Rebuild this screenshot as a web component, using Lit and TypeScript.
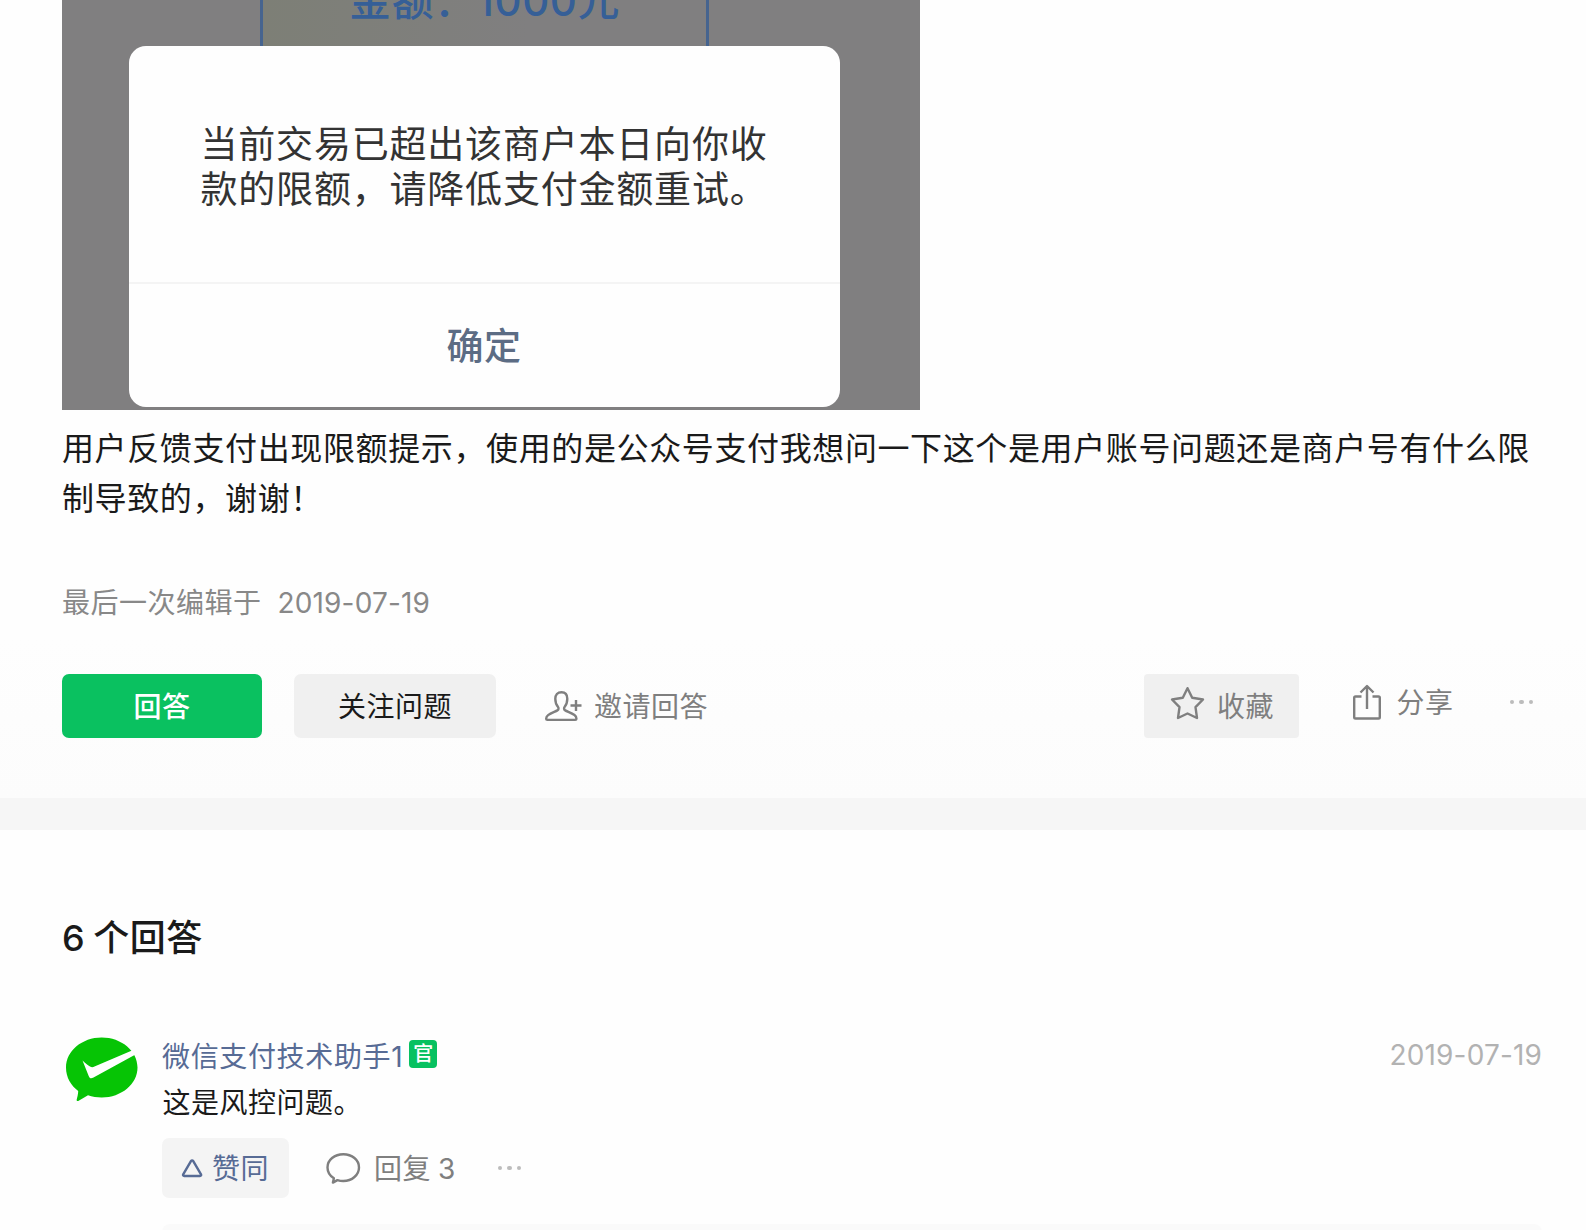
import { LitElement, html, css, svg } from "lit";
import { customElement, property } from "lit/decorators.js";

const icons = {
  invite: svg`
    <path d="M16.5 1.2c-4 0-6.2 2.8-6.2 6.6 0 3.2.9 5.9 2.6 7.9 1 1.2.8 3-.5 3.700-2.300 1.300-6.400 2.600-9.300 4.700C1.700 25.100 1.200 26.200 1.200 27.600c0 .8.500 1.300 1.300 1.300h27.600c.8 0 1.300-.5 1.300-1.300 0-1.400-.500-2.500-1.900-3.500-2.900-2.100-7-3.400-9.300-4.700-1.300-.7-1.500-2.500-.5-3.700 1.700-2 2.600-4.700 2.600-7.900 0-3.800-1.900-6.600-5.800-6.600Z" />
    <path d="M25.500 14.500h11M31 9v11" />
  `,
  star: svg`
    <path d="M17.500 2.200 22.200 11.800 33 13.500 25.500 21.200 27 32 17.500 27.500 8 32l1.500-10.800L2 13.500l10.800-1.700Z" />
  `,
  share: svg`
    <path d="M9.500 12.500H3.500c-.8 0-1.300.5-1.300 1.300v19.400c0 .8.500 1.300 1.300 1.300h23c.8 0 1.300-.5 1.300-1.300V13.800c0-.8-.5-1.300-1.300-1.300h-6" />
    <path d="M15 25V2M8.500 8.500 15 2l6.500 6.500" />
  `,
  up: svg`
    <path d="M9.100 1.900a1.200 1.200 0 0 1 2 0L19 15.300c.5.900 0 1.700-1 1.700H2.200c-1 0-1.500-.8-1-1.700Z" />
  `,
  comment: svg`
    <path d="M17.300 1.200c-8.800 0-15.800 5.800-15.800 13.200 0 4.500 2.500 8.400 6.400 10.800l-1 4.400 4.500-2.500c1.900.6 3.800.9 5.900.9 8.800 0 15.700-6.200 15.700-13.600S26.100 1.200 17.300 1.200Z" />
  `,
};

@customElement("line-icon")
export class LineIcon extends LitElement {
  @property() name: keyof typeof icons = "star";

  @property({ type: Number }) width = 34;

  @property({ type: Number }) height = 34;

  static styles = css`
    :host {
      display: block;
      flex: none;
    }

    svg {
      display: block;
      overflow: visible;
      fill: none;
      stroke: currentColor;
      stroke-width: 2.4;
      stroke-linejoin: round;
    }
  `;

  render() {
    return html`<svg
      width=${this.width}
      height=${this.height}
      viewBox="0 0 ${this.width} ${this.height}"
    >
      ${icons[this.name]}
    </svg>`;
  }
}

@customElement("more-dots")
export class MoreDots extends LitElement {
  static styles = css`
    :host {
      display: flex;
      flex: none;
      gap: 5px;
    }

    i {
      width: 4.5px;
      height: 4.5px;
      border-radius: 50%;
      background: #bcbcbc;
    }
  `;

  render() {
    return html`<i></i><i></i><i></i>`;
  }
}

@customElement("limit-dialog")
export class LimitDialog extends LitElement {
  static styles = css`
    :host {
      display: flex;
      flex-direction: column;
      align-items: center;
      width: 858px;
      height: 410px;
      overflow: hidden;
      background: #807f80;
    }

    .order {
      box-sizing: border-box;
      flex: none;
      width: 449px;
      height: 46px;
      margin-right: 13px;
      border: solid #46648f;
      border-width: 0 3px;
      background: linear-gradient(90deg, #7d7f76, #807f80 60%);
      color: #365f97;
      font-size: 42px;
      font-weight: 500;
      line-height: 50px;
      text-align: center;
      white-space: nowrap;
    }

    .order p {
      margin: -24px 0 0;
    }

    .dialog {
      box-sizing: border-box;
      flex: none;
      width: 711px;
      height: 361px;
      margin-right: 14px;
      border-radius: 17px;
      background: #fefefe;
      display: flex;
      flex-direction: column;
    }

    .message {
      box-sizing: border-box;
      height: 238px;
      margin: 0;
      padding: 77px 0 0 72px;
      border-bottom: 2px solid #f4f4f4;
      color: #333;
      font-size: 37px;
      line-height: 44.5px;
      letter-spacing: 0.8px;
    }

    .confirm {
      flex: 1;
      display: flex;
      align-items: center;
      justify-content: center;
      padding-bottom: 3px;
      color: #5c6c84;
      font-size: 37px;
      font-weight: 500;
    }
  `;

  render() {
    return html`
      <div class="order"><p>金额：1000元</p></div>
      <div class="dialog">
        <p class="message">
          当前交易已超出该商户本日向你收<br />款的限额，请降低支付金额重试。
        </p>
        <div class="confirm">确定</div>
      </div>
    `;
  }
}

@customElement("answer-item")
export class AnswerItem extends LitElement {
  @property() author = "";

  @property() date = "";

  @property() content = "";

  @property({ type: Number }) replies = 0;

  static styles = css`
    :host {
      display: flex;
      gap: 22px;
    }

    .avatar {
      flex: none;
      width: 78px;
      height: 78px;
    }

    .body {
      flex: 1;
      padding-top: 1px;
    }

    .head {
      display: flex;
      align-items: center;
      height: 40px;
    }

    .author {
      color: #576b95;
      letter-spacing: 0.65px;
    }

    .badge {
      width: 28px;
      height: 28px;
      margin: -2px 0 0 6px;
      border-radius: 4px;
      background: #07c160;
      color: #fff;
      font-size: 20px;
      font-weight: 500;
      line-height: 29px;
      letter-spacing: 0;
      text-align: center;
    }

    .date {
      margin-left: auto;
      color: #b2b2b2;
      letter-spacing: 0.15px;
    }

    .content {
      margin: 8px 0 15px;
      line-height: 40px;
      color: #1a1a1a;
      text-indent: 0.5px;
    }

    .actions {
      display: flex;
      align-items: center;
      height: 60px;
      color: #7f7f7f;
    }

    .actions span {
      padding-bottom: 2px;
    }

    .agree {
      box-sizing: border-box;
      display: flex;
      align-items: center;
      gap: 10px;
      width: 127px;
      height: 60px;
      padding-left: 20px;
      border-radius: 7px;
      background: #f4f4f4;
      color: #576b95;
    }

    .reply {
      display: flex;
      align-items: center;
      gap: 13px;
      margin: 0 42px 0 37px;
      word-spacing: -1.5px;
    }

    .replies {
      height: 60px;
      margin-top: 26px;
      border-radius: 8px;
      background: #fafafa;
    }
  `;

  render() {
    return html`
      <svg class="avatar" viewBox="0 0 78 78">
        <path
          fill="#06c405"
          d="M39.700 3.500C20 3.500 4 17 4 33.500c0 10 5 18 12.200 23.500 0 3-1 6.500-1.500 8.500-.3 1.500.8 2 2 1.300L26 61.300c4.300 1.500 9 2.200 13.700 2.200 19.700 0 35.800-13.500 35.800-30S59.400 3.500 39.700 3.500Z"
        />
        <path
          fill="#fff"
          d="M20.500 26.500c2.500 2.600 4.800 4.300 7.500 6 1.500.9 3 .8 4.500.1L70 16.500l3.500 4L31.500 43.500c-2.500 1.400-3.800 1-4.800-1.500Z"
        />
      </svg>
      <div class="body">
        <div class="head">
          <span class="author">${this.author}</span>
          <span class="badge">官</span>
          <span class="date">${this.date}</span>
        </div>
        <p class="content">${this.content}</p>
        <div class="actions">
          <div class="agree">
            <line-icon name="up" width="20" height="18"></line-icon>
            <span>赞同</span>
          </div>
          <div class="reply">
            <line-icon name="comment" width="35" height="30"></line-icon>
            <span>回复 ${this.replies}</span>
          </div>
          <more-dots></more-dots>
        </div>
        <div class="replies"></div>
      </div>
    `;
  }
}

@customElement("app-root")
export class AppRoot extends LitElement {
  static styles = css`
    :host {
      display: block;
      height: 1230px;
      overflow: hidden;
      background: #fefefe;
      color: #1a1a1a;
      font-family: Inter, "Noto Sans CJK SC", sans-serif;
      font-size: 28px;
      letter-spacing: 0.5px;
    }

    .question {
      box-sizing: border-box;
      height: 798px;
      padding: 0 44px 0 62px;
      background: linear-gradient(#fefefe 80%, #fcfcfc);
    }

    .text {
      margin: 14px 0 0;
      font-size: 32px;
      line-height: 50px;
      letter-spacing: 0.62px;
      white-space: nowrap;
    }

    .meta {
      display: flex;
      gap: 16px;
      margin-top: 59px;
      color: #888;
      line-height: 40px;
    }

    .meta time {
      letter-spacing: 0.15px;
    }

    .toolbar {
      display: flex;
      align-items: center;
      height: 64px;
      margin-top: 51px;
      color: #7f7f7f;
    }

    .toolbar span {
      padding-bottom: 2px;
    }

    .button {
      display: flex;
      align-items: center;
      justify-content: center;
      height: 64px;
      border-radius: 7px;
      background: #f0f0f0;
    }

    .primary {
      width: 200px;
      background: #0ac160;
      color: #fff;
      font-weight: 500;
    }

    .follow {
      width: 202px;
      margin-left: 32px;
      color: #1a1a1a;
    }

    .invite {
      display: flex;
      align-items: center;
      gap: 12px;
      margin-left: 49px;
    }

    .collect {
      width: 155px;
      gap: 12px;
      margin-left: auto;
      border-radius: 4px;
    }

    .collect line-icon {
      margin-top: -6px;
    }

    .share {
      display: flex;
      align-items: center;
      gap: 14px;
      margin: -8px 56px 0 53px;
    }

    .toolbar more-dots {
      margin: -8px 9px 0 0;
    }

    .divider {
      height: 32px;
      background: #f6f6f6;
    }

    .answers {
      padding: 83px 44px 0 62px;
    }

    h2 {
      margin: 0 0 71px;
      font-size: 36px;
      font-weight: 500;
      line-height: 50px;
      word-spacing: -2px;
    }
  `;

  render() {
    return html`
      <section class="question">
        <limit-dialog></limit-dialog>
        <p class="text">
          用户反馈支付出现限额提示，使用的是公众号支付我想问一下这个是用户账号问题还是商户号有什么限<br />制导致的，谢谢！
        </p>
        <div class="meta"><span>最后一次编辑于</span><time>2019-07-19</time></div>
        <div class="toolbar">
          <div class="button primary"><span>回答</span></div>
          <div class="button follow"><span>关注问题</span></div>
          <div class="invite">
            <line-icon name="invite" width="37" height="30"></line-icon>
            <span>邀请回答</span>
          </div>
          <div class="button collect">
            <line-icon name="star" width="35" height="34"></line-icon>
            <span>收藏</span>
          </div>
          <div class="share">
            <line-icon name="share" width="30" height="36"></line-icon>
            <span>分享</span>
          </div>
          <more-dots></more-dots>
        </div>
      </section>
      <div class="divider"></div>
      <section class="answers">
        <h2>6 个回答</h2>
        <answer-item
          author="微信支付技术助手1"
          date="2019-07-19"
          content="这是风控问题。"
          replies="3"
        ></answer-item>
      </section>
    `;
  }
}
